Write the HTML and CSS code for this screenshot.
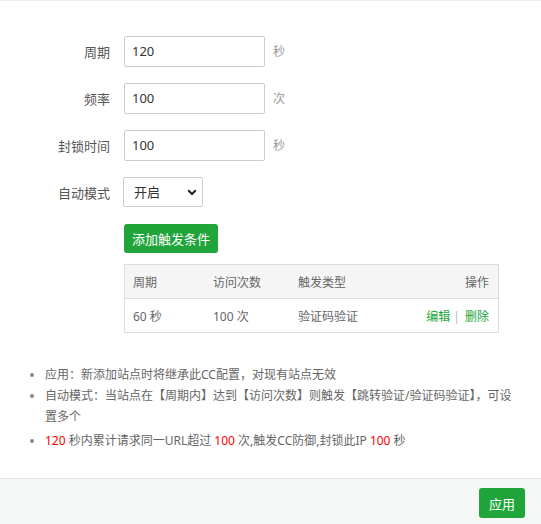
FILE: index.html
```html
<!DOCTYPE html>
<html lang="zh-CN">
<head>
<meta charset="utf-8">
<title>CC</title>
<link rel="stylesheet" href="styles.css">
</head>
<body>
<div class="page">
  <main class="main">
    <form class="form">
      <div class="form-row">
        <label class="form-label">周期</label>
        <input class="form-input" type="text" value="120">
        <span class="form-unit">秒</span>
      </div>
      <div class="form-row">
        <label class="form-label">频率</label>
        <input class="form-input" type="text" value="100">
        <span class="form-unit">次</span>
      </div>
      <div class="form-row">
        <label class="form-label">封锁时间</label>
        <input class="form-input" type="text" value="100">
        <span class="form-unit">秒</span>
      </div>
      <div class="form-row">
        <label class="form-label">自动模式</label>
        <div class="select-wrap">
          <select class="form-select">
            <option>开启</option>
            <option>关闭</option>
          </select>
          <svg class="select-arrow" width="10" height="7" viewBox="0 0 10 7"><path d="M1.2 1.3 L5 5 L8.8 1.3" fill="none" stroke="#222" stroke-width="2"/></svg>
        </div>
      </div>
      <div class="form-block">
        <button type="button" class="btn btn-add">添加触发条件</button>
        <table class="rule-table">
          <thead>
            <tr><th class="c1">周期</th><th class="c2">访问次数</th><th class="c3">触发类型</th><th class="c4">操作</th></tr>
          </thead>
          <tbody>
            <tr>
              <td class="c1">60 秒</td><td class="c2">100 次</td><td class="c3">验证码验证</td>
              <td class="c4"><a class="link">编辑</a><span class="sep">|</span><a class="link">删除</a></td>
            </tr>
          </tbody>
        </table>
      </div>
    </form>
    <ul class="help">
      <li>应用：新添加站点时将继承此CC配置，对现有站点无效</li>
      <li>自动模式：当站点在【周期内】达到【访问次数】则触发【跳转验证/验证码验证】，可设置多个</li>
      <li class="help-last"><span class="red">120</span> 秒内累计请求同一URL超过 <span class="red">100</span> 次,触发CC防御,封锁此IP <span class="red">100</span> 秒</li>
    </ul>
  </main>
  <footer class="footer">
    <button type="button" class="btn btn-apply">应用</button>
  </footer>
</div>
</body>
</html>
```

FILE: styles.css
```css
html, body {
  margin: 0;
  padding: 0;
  background: #fff;
}
body {
  font-family: "Noto Sans", "Noto Sans CJK SC", sans-serif;
  font-size: 12px;
  color: #666;
}
.page {
  height: 524px;
  display: flex;
  flex-direction: column;
  border-top: 1px solid #ececec;
  box-sizing: border-box;
}
.main {
  flex: 1;
}
.form {
  padding-top: 35px;
}
.form-row {
  display: flex;
  align-items: center;
  height: 30px;
  margin-bottom: 17px;
}
.form-label {
  width: 110px;
  text-align: right;
  font-size: 13px;
  color: #555;
  margin-right: 14px;
}
.form-input {
  width: 141px;
  height: 31px;
  box-sizing: border-box;
  border: 1px solid #ccc;
  border-radius: 2px;
  padding: 0 7px;
  font-family: inherit;
  font-size: 13px;
  color: #333;
  outline: none;
}
.form-unit {
  margin-left: 8px;
  font-size: 12px;
  color: #999;
}
.select-wrap {
  position: relative;
  margin-left: -1px;
  width: 80px;
  height: 30px;
}
.form-select {
  appearance: none;
  -webkit-appearance: none;
  width: 80px;
  height: 30px;
  box-sizing: border-box;
  border: 1px solid #ccc;
  border-radius: 2px;
  background: #fff;
  padding: 0 10px;
  font-family: inherit;
  font-size: 13px;
  color: #333;
  outline: none;
}
.select-arrow {
  position: absolute;
  right: 6px;
  top: 12px;
}
.form-block {
  padding-left: 124px;
  padding-right: 42px;
}
.btn {
  border: none;
  background: #20a53a;
  color: #fff;
  font-family: inherit;
  font-size: 13px;
  border-radius: 3px;
  cursor: pointer;
  padding: 0;
}
.btn-add {
  display: block;
  width: 94px;
  height: 29px;
  margin-bottom: 11px;
}
.rule-table {
  width: 375px;
  border-collapse: collapse;
  border: 1px solid #ddd;
  font-size: 12px;
  color: #666;
}
.rule-table th {
  background: #f5f5f5;
  font-weight: normal;
  height: 33px;
  text-align: left;
  padding: 0 8px;
  border-bottom: 1px solid #ddd;
}
.rule-table td {
  height: 33px;
  padding: 0 8px;
}
.rule-table .c1 { width: 64px; }
.rule-table .c2 { width: 69px; }
.rule-table .c4 { text-align: right; padding-right: 9px; }
.link {
  color: #20a53a;
  cursor: pointer;
}
.sep {
  color: #bbb;
  margin: 0 5px 0 3px;
}
.help {
  margin: 31px 20px 0 0;
  padding-left: 45px;
  list-style: disc;
  color: #666;
  font-size: 12px;
  line-height: 21px;
}
.help li::marker {
  color: #888;
}
.help-last {
  margin-top: 3px;
}
.red {
  color: #f00;
}
.footer {
  height: 46px;
  border-top: 1px solid #e6e6e6;
  background: #f6f8f8;
  display: flex;
  justify-content: flex-end;
  align-items: flex-start;
  padding: 9px 16px 0 0;
  box-sizing: border-box;
  flex: none;
}
.btn-apply {
  width: 46px;
  height: 30px;
}
```
